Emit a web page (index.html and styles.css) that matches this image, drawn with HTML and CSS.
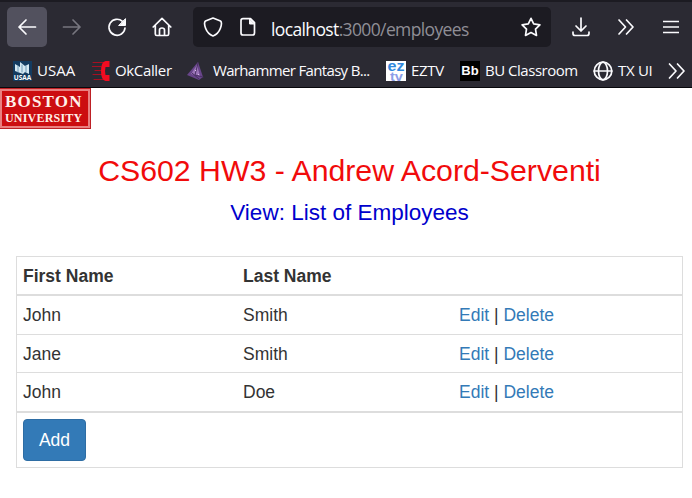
FILE: index.html
```
<!DOCTYPE html>
<html lang="en">
<head>
<meta charset="utf-8">
<title>Employees</title>
<link rel="stylesheet" href="styles.css">
</head>
<body>
<header class="browser">
  <div class="tabstrip"></div>
  <nav class="toolbar">
    <span class="tool back"><svg width="20" height="20" viewBox="0 0 20 20"><path d="M18.500 10H2M9 3L2 10l7 7"/></svg></span>
    <span class="tool forward"><svg width="20" height="20" viewBox="0 0 20 20"><path d="M1.500 10H18M11 3l7 7-7 7"/></svg></span>
    <span class="tool"><svg width="20" height="20" viewBox="0 0 20 20"><path d="M15.500 4.400A8 8 0 1 0 18 11"/><path class="solid" d="M18.500 2v6.500h-6.500z"/></svg></span>
    <span class="tool"><svg width="20" height="20" viewBox="0 0 20 20"><path d="M1.200 10L10 1.400l8.800 8.600M3.300 8.300v8.700q0 1.500 1.500 1.500h10.400q1.500 0 1.500-1.500V8.300M7.500 18v-5q0-2 2.500-2t2.500 2v5"/></svg></span>
    <div class="address">
      <svg class="shield" width="20" height="20" viewBox="0 0 20 20"><path d="M10 1l7.500 3c1.400 1 .9 4.500-.2 7.500C15.800 15.500 12.500 18 10 19c-2.500-1-5.800-3.500-7.300-7.500C1.600 8.500 1.100 5 2.500 4z"/></svg>
      <svg class="page-icon" width="16" height="20" viewBox="0 0 16 20"><path d="M3 1.700h7.500l4 4V16q0 2-2 2H3q-2 0-2-2V3.700q0-2 2-2z"/><path class="solid" d="M9.500 2v5h5z"/></svg>
      <span class="url"><b>localhost</b>:3000/employees</span>
      <svg class="star" width="22" height="20" viewBox="0 0 22 20"><path d="M11 1.300l2.700 5.500 6.200 1-4.400 4.400 1 6.200-5.500-2.900-5.500 2.900 1-6.200L2.100 7.800l6.200-1z"/></svg>
    </div>
    <svg class="download" width="20" height="20" viewBox="0 0 20 20"><path d="M10 1v13M5 9l5 5 5-5M2 15v1.500Q2 18.500 4 18.500h12q2 0 2-2V15"/></svg>
    <svg class="more" width="18" height="18" viewBox="0 0 18 18"><path d="M2 2l6.500 7L2 16M9.500 2l6.500 7-6.500 7"/></svg>
    <svg class="menu" width="16" height="14" viewBox="0 0 16 14"><path d="M0 1.500h16M0 7h16M0 12.500h16"/></svg>
  </nav>
  <nav class="bookmarks">
    <span class="mark"><svg class="art" width="19" height="20" viewBox="0 0 19 20"><path fill="#143b60" d="M0 0h19v20H0z"/><path fill="#d5e8f2" d="M2 3l5 3V1l5 4 4-2v10l-4-2-2 2-8-3z"/><path stroke="#6e9bb8" d="M5 5v6M9 4v7M13 5v6"/><text x="9.500" y="19" font-size="6.500" font-weight="bold" text-anchor="middle" fill="#fff">USAA</text></svg><span class="l1">USAA</span></span>
    <span class="mark"><svg class="art" width="18" height="20" viewBox="0 0 18 20"><path stroke="#a60f21" d="M1 1.500h11M0 5.500h9M3 9.500h6M1 13.500h9M2 18.500h9"/><path fill="#f20c21" d="M17.500 0h-4Q9 1 9 10t4.500 10h4v-6h-4q-1-4 0-8h4z"/></svg><span class="l2">OkCaller</span></span>
    <span class="mark"><svg class="art" width="18" height="20" viewBox="0 0 18 20"><path fill="#68458a" d="M0 14L11 1l5 15-4 3z"/><path fill="#9b75b8" d="M10 4l3 11-9-2z"/><path fill="none" stroke="#493163" d="M11 2L8 14l8 2M5 12l7 6"/><path fill="#d7bdeb" d="M8 9h1v1H8zm3 4h1v1h-1z"/></svg><span class="l3">Warhammer Fantasy B...</span></span>
    <span class="mark"><svg class="art" width="20" height="20" viewBox="0 0 20 20"><path fill="#fff" d="M0 0h20v20H0z"/><g font-family="Liberation Sans" font-weight="bold"><text x="1.500" y="9.500" font-size="14" textLength="17" lengthAdjust="spacingAndGlyphs" fill="#3188dd">ez</text><text x="4" y="19.500" font-size="13" textLength="13" lengthAdjust="spacingAndGlyphs" fill="#8c9ee8">tv</text></g></svg><span class="l4">EZTV</span></span>
    <span class="mark"><span class="bb">Bb</span><span class="l5">BU Classroom</span></span>
    <span class="mark"><svg width="20" height="20" viewBox="0 0 20 20"><circle cx="10" cy="10" r="8.800"/><ellipse cx="10" cy="10" rx="4.500" ry="8.800"/><path d="M1.200 10h17.600"/></svg><span class="l6">TX UI</span></span>
    <span class="mark"><svg width="18" height="18" viewBox="0 0 18 18"><path d="M1.500 2l6.500 7-6.500 7M9.500 2L16 9l-6.500 7"/></svg></span>
  </nav>
</header>
<main>
  <div class="logo"><span class="boston">BOSTON</span><span class="university">UNIVERSITY</span></div>
  <h1>CS602 HW3 - Andrew Acord-Serventi</h1>
  <h2>View: List of Employees</h2>
  <table>
    <thead><tr><th>First Name</th><th>Last Name</th><th></th></tr></thead>
    <tbody>
      <tr><td>John</td><td>Smith</td><td><a>Edit</a> | <a>Delete</a></td></tr>
      <tr class="short"><td>Jane</td><td>Smith</td><td><a>Edit</a> | <a>Delete</a></td></tr>
      <tr class="last"><td>John</td><td>Doe</td><td><a>Edit</a> | <a>Delete</a></td></tr>
    </tbody>
    <tfoot><tr><td colspan="3"><button>Add</button></td></tr></tfoot>
  </table>
</main>
</body>
</html>
```
FILE: styles.css
```
* { box-sizing: border-box; }
body { margin: 0; height: 498px; overflow: hidden; background: #fff; color: #333; font: 17.5px/25px "Liberation Sans", sans-serif; }
.browser { height: 88px; background: #2b2a33; border-bottom: 1px solid #08080c; color: #fbfbfe; font-family: "Open Sans", "Noto Sans", sans-serif; }
.tabstrip { height: 2px; background: #1c1b22; }
svg { flex: none; display: block; fill: none; stroke: #fbfbfe; stroke-width: 1.7; stroke-linecap: round; stroke-linejoin: round; }
svg .solid { fill: #fbfbfe; stroke-width: 1; }
.art { stroke: none; stroke-width: 1; }
.toolbar { display: flex; align-items: center; height: 50px; padding-left: 7px; }
.tool { width: 40px; height: 40px; margin-right: 5px; border-radius: 5px; display: grid; place-items: center; }
.back { background: #52515e; }
.forward svg { stroke: #77767f; }
.address { display: flex; align-items: center; width: 358px; height: 40px; margin-left: 6px; padding-left: 10px; border-radius: 5px; background: #1c1b22; }
.page-icon { margin-left: 17px; }
.url { width: 250px; margin-left: 15px; font-size: 17.5px; line-height: 24px; padding-top: 3px; letter-spacing: -.63px; color: #8f8e96; white-space: nowrap; }
.url b { font-weight: 400; color: #fbfbfe; }
.star { margin-left: -1px; }
.download { margin-left: 20px; }
.more { margin-left: 26px; }
.menu { margin-left: 28px; stroke-linecap: butt; }
.bookmarks { display: grid; grid-template-columns: 79px 95px 199px 74px 133px 75px 24px; height: 37px; padding-left: 13px; font-size: 15px; line-height: 21px; }
.mark { display: flex; align-items: center; gap: 5px; white-space: nowrap; }
.mark:nth-child(3) { gap: 8px; }
.l2 { letter-spacing: -.35px; }
.l3 { letter-spacing: -.66px; }
.l4, .l6 { letter-spacing: -.3px; }
.l5 { letter-spacing: -.48px; }
.bb { width: 20px; height: 20px; background: #000; font: bold 13px/20px "Liberation Sans", sans-serif; text-align: center; }
.logo { display: flex; flex-direction: column; width: 91px; height: 41px; padding-left: 5px; background: #cc0d10; border: 1px solid #bd2025; border-left: 0; box-shadow: inset 0 0 0 2px #e98080; color: #fff0e9; font-family: "Liberation Serif", serif; font-weight: bold; white-space: nowrap; }
.boston { margin-top: 4px; font-size: 17px; line-height: 18px; letter-spacing: 1.2px; }
.university { font-size: 12px; line-height: 14px; letter-spacing: .2px; }
h1, h2 { margin: 0; font-weight: 400; text-align: center; }
h1 { margin-top: 24px; padding-left: 7px; font-size: 30.25px; line-height: 36px; color: #f10b0b; }
h2 { margin-top: 11px; padding-left: 7px; font-size: 22.5px; line-height: 26px; color: #00c; }
table { width: 667px; margin: 30px 0 0 16px; table-layout: fixed; border: 1px solid #ddd; border-spacing: 0; }
th, td { height: 39px; padding: 0 0 0 6px; text-align: left; vertical-align: middle; border-bottom: 1px solid #ddd; }
th { padding-top: 2px; border-bottom-width: 2px; }
th:first-child { width: 220px; }
th:nth-child(2) { width: 216px; }
.short td { height: 38px; padding-top: 2px; }
.last td { height: 40px; border-bottom-width: 2px; }
tfoot td { height: 54px; border: 0; }
a { color: #337ab7; }
button { display: block; width: 63px; height: 42px; padding: 0; border: 1px solid #2e6da4; border-radius: 4px; background: #337ab7; color: #fff; font: inherit; }
```
